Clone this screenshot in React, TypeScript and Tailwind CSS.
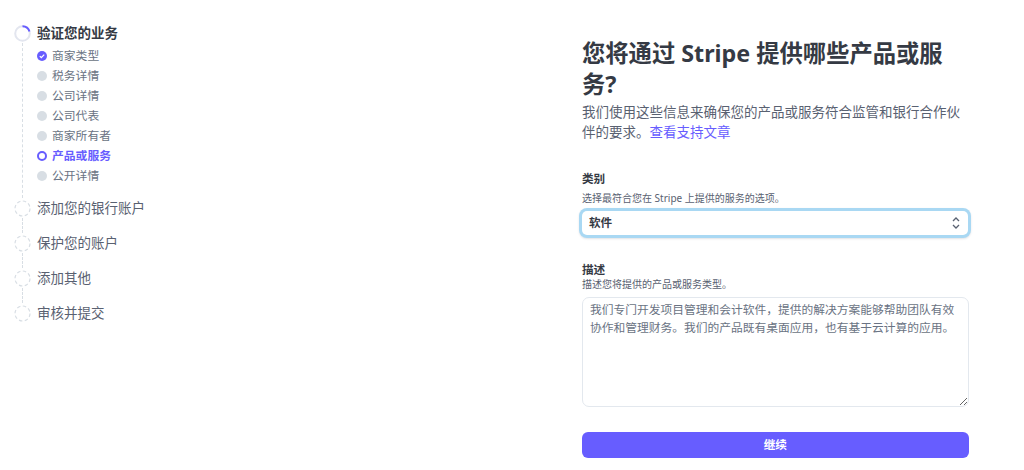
const FONT = "font-['Noto_Sans','Noto_Sans_CJK_SC',sans-serif]";

const subs = [
  { label: "商家类型", state: "done" },
  { label: "税务详情", state: "todo" },
  { label: "公司详情", state: "todo" },
  { label: "公司代表", state: "todo" },
  { label: "商家所有者", state: "todo" },
  { label: "产品或服务", state: "current" },
  { label: "公开详情", state: "todo" },
];

function SubIcon({ state }: { state: string }) {
  if (state === "done") {
    return (
      <svg width="10" height="10" viewBox="0 0 10 10">
        <circle cx="5" cy="5" r="5" fill="#675dff" />
        <path d="M2.8 5.1 L4.3 6.6 L7.2 3.6" fill="none" stroke="#fff" strokeWidth="1.3" />
      </svg>
    );
  }
  if (state === "current") {
    return <span className="block size-[10px] rounded-full border-2 border-[#675dff]" />;
  }
  return <span className="block size-[10px] rounded-full bg-[#d8dee4]" />;
}

function Spinner() {
  return (
    <svg width="17" height="17" viewBox="0 0 17 17">
      <circle cx="8.5" cy="8.5" r="7.3" fill="none" stroke="#e3e6ef" strokeWidth="2" />
      <path d="M8.5 1.2 A7.3 7.3 0 0 1 15.5 6.5" fill="none" stroke="#675dff" strokeWidth="2" />
    </svg>
  );
}

function DashedCircle() {
  return (
    <svg width="17" height="17" viewBox="0 0 17 17">
      <circle cx="8.5" cy="8.5" r="7.5" fill="none" stroke="#d8dee4" strokeWidth="1.2" strokeDasharray="3.5 2.4" />
    </svg>
  );
}

function Step({ label, last }: { label: string; last?: boolean }) {
  return (
    <div className="flex h-[35px] gap-[6.5px]">
      <div className="flex w-[17px] flex-col items-center">
        <div className="mt-[1.5px] shrink-0"><DashedCircle /></div>
        {!last && <div className="mt-[1px] flex-1 border-l border-dashed border-[#d8dee4]" />}
      </div>
      <div className="h-5 text-[13.5px] leading-5 text-[#596171]">{label}</div>
    </div>
  );
}

export default function App() {
  return (
    <div className={`flex h-[470px] w-[1024px] overflow-hidden bg-white ${FONT}`}>
      <aside className="w-[582px] shrink-0 pl-[13.5px] pt-[23px]">
        <div className="flex h-[175px] gap-[6.5px]">
          <div className="flex w-[17px] flex-col items-center">
            <div className="mt-[1.5px] shrink-0"><Spinner /></div>
            <div className="mt-[1px] flex-1 border-l border-dashed border-[#d8dee4]" />
          </div>
          <div>
            <div className="h-5 text-[13.5px] font-bold leading-5 text-[#353a44]">验证您的业务</div>
            <ul className="mt-[3.25px]">
              {subs.map((s) => (
                <li key={s.label} className="flex h-5 items-center gap-[5px]">
                  <SubIcon state={s.state} />
                  <span
                    className={
                      s.state === "current"
                        ? "text-[11.8px] font-bold text-[#675dff]"
                        : "text-[11.8px] text-[#6a7383]"
                    }
                  >
                    {s.label}
                  </span>
                </li>
              ))}
            </ul>
          </div>
        </div>
        <Step label="添加您的银行账户" />
        <Step label="保护您的账户" />
        <Step label="添加其他" />
        <Step label="审核并提交" last />
      </aside>

      <main className="w-[386px] shrink-0 pt-[38px]">
        <h1 className="text-[23.3px] font-bold leading-[31px] text-[#353a44]">您将通过 Stripe 提供哪些产品或服<br />务?</h1>
        <p className="mt-[2px] text-[13.5px] leading-[20px] text-[#596171]">
          我们使用这些信息来确保您的产品或服务符合监管和银行合作伙伴的要求。
          <span className="text-[#675dff]">查看支持文章</span>
        </p>

        <label className="mt-[29px] block text-[11.6px] font-bold leading-4 text-[#353a44]">类别</label>
        <p className="mt-[5px] text-[10px] leading-[13px] text-[#596171]">选择最符合您在 Stripe 上提供的服务的选项。</p>
        <div className="mt-[6px] flex h-[24px] items-center justify-between rounded-[5px] bg-white px-[7px] text-[11.6px] font-bold text-[#353a44] shadow-[0_0_0_3px_#a9d8f3,0_1px_2px_3px_rgba(60,66,87,0.15)]">
          <span>软件</span>
          <svg width="10" height="14" viewBox="0 0 10 14" fill="none" stroke="#596171" strokeWidth="1.3">
            <path d="M2 5 L5 2 L8 5" />
            <path d="M2 9 L5 12 L8 9" />
          </svg>
        </div>

        <label className="mt-[27px] block text-[11.6px] font-bold leading-4 text-[#353a44]">描述</label>
        <p className="text-[10px] leading-[13px] text-[#596171]">描述您将提供的产品或服务类型。</p>
        <textarea
          readOnly
          className="mt-[6px] block h-[110px] w-[386.5px] rounded-[7px] border border-[#e3e8ee] bg-white px-[7px] py-[2px] text-[11.75px] leading-[18px] text-[#6a7383] outline-none"
          value="我们专门开发项目管理和会计软件，提供的解决方案能够帮助团队有效协作和管理财务。我们的产品既有桌面应用，也有基于云计算的应用。"
        />

        <button className="mt-[25px] block h-[26px] w-[386.5px] rounded-[6px] bg-[#675dff] text-[11.6px] font-bold text-white">继续</button>
      </main>
    </div>
  );
}
